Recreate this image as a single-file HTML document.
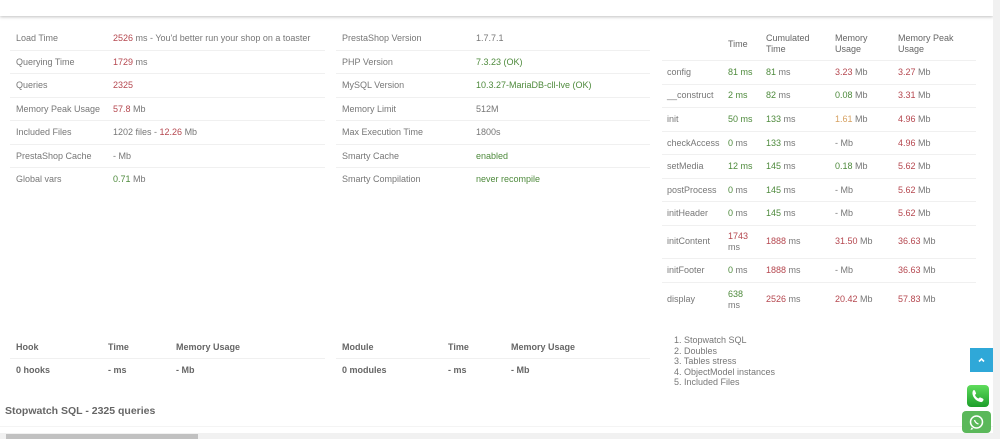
<!DOCTYPE html>
<html><head><meta charset="utf-8"><style>
*{margin:0;padding:0;box-sizing:border-box}
body{width:1000px;height:439px;overflow:hidden;background:#fff;font-family:"Liberation Sans",sans-serif;font-size:9px;color:#777;position:relative}
.a{position:absolute;white-space:nowrap}
.r{color:#b5474f}.g{color:#4e8a3c}.o{color:#d6a060}
.l{position:absolute;height:1px;background:#f0f0f0}
.h{position:absolute;line-height:11px}
b{font-weight:bold;color:#666}
</style></head><body>
<div class="a" style="left:0;top:0;width:993px;height:16px;background:#fff;box-shadow:0 1px 3px rgba(0,0,0,.25)"></div>
<div class="a" style="left:993px;top:0;width:7px;height:439px;background:#f1f1f1"></div>

<div class="a" style="left:16px;top:33px">Load Time</div><div class="a" style="left:113px;top:33px"><span class="r">2526</span> ms - You'd better run your shop on a toaster</div>
<div class="a" style="left:16px;top:57px">Querying Time</div><div class="a" style="left:113px;top:57px"><span class="r">1729</span> ms</div>
<div class="a" style="left:16px;top:80px">Queries</div><div class="a r" style="left:113px;top:80px">2325</div>
<div class="a" style="left:16px;top:104px">Memory Peak Usage</div><div class="a" style="left:113px;top:104px"><span class="r">57.8</span> Mb</div>
<div class="a" style="left:16px;top:127px">Included Files</div><div class="a" style="left:113px;top:127px">1202 files - <span class="r">12.26</span> Mb</div>
<div class="a" style="left:16px;top:151px">PrestaShop Cache</div><div class="a" style="left:113px;top:151px">- Mb</div>
<div class="a" style="left:16px;top:174px">Global vars</div><div class="a" style="left:113px;top:174px"><span class="g">0.71</span> Mb</div>
<div class="l" style="left:10px;width:315px;top:50px"></div><div class="l" style="left:10px;width:315px;top:73px"></div><div class="l" style="left:10px;width:315px;top:97px"></div><div class="l" style="left:10px;width:315px;top:120px"></div><div class="l" style="left:10px;width:315px;top:144px"></div><div class="l" style="left:10px;width:315px;top:167px"></div>

<div class="a" style="left:342px;top:33px">PrestaShop Version</div><div class="a" style="left:476px;top:33px">1.7.7.1</div>
<div class="a" style="left:342px;top:57px">PHP Version</div><div class="a g" style="left:476px;top:57px">7.3.23 (OK)</div>
<div class="a" style="left:342px;top:80px">MySQL Version</div><div class="a g" style="left:476px;top:80px">10.3.27-MariaDB-cll-lve (OK)</div>
<div class="a" style="left:342px;top:104px">Memory Limit</div><div class="a" style="left:476px;top:104px">512M</div>
<div class="a" style="left:342px;top:127px">Max Execution Time</div><div class="a" style="left:476px;top:127px">1800s</div>
<div class="a" style="left:342px;top:151px">Smarty Cache</div><div class="a g" style="left:476px;top:151px">enabled</div>
<div class="a" style="left:342px;top:174px">Smarty Compilation</div><div class="a g" style="left:476px;top:174px">never recompile</div>
<div class="l" style="left:336px;width:314px;top:50px"></div><div class="l" style="left:336px;width:314px;top:73px"></div><div class="l" style="left:336px;width:314px;top:97px"></div><div class="l" style="left:336px;width:314px;top:120px"></div><div class="l" style="left:336px;width:314px;top:144px"></div><div class="l" style="left:336px;width:314px;top:167px"></div>

<div class="h" style="left:728px;top:39px;color:#666">Time</div>
<div class="h" style="left:766px;top:33px;color:#666">Cumulated<br>Time</div>
<div class="h" style="left:835px;top:33px;color:#666">Memory<br>Usage</div>
<div class="h" style="left:898px;top:33px;color:#666">Memory Peak<br>Usage</div>
<div class="l" style="left:662px;width:314px;top:60px"></div>
<div class="a" style="left:667px;top:67px">config</div><div class="a g" style="left:728px;top:67px">81 ms</div><div class="a" style="left:766px;top:67px"><span class="g">81</span> ms</div><div class="a" style="left:835px;top:67px"><span class="r">3.23</span> Mb</div><div class="a" style="left:898px;top:67px"><span class="r">3.27</span> Mb</div>
<div class="l" style="left:662px;width:314px;top:84px"></div>
<div class="a" style="left:667px;top:90px">__construct</div><div class="a g" style="left:728px;top:90px">2 ms</div><div class="a" style="left:766px;top:90px"><span class="g">82</span> ms</div><div class="a" style="left:835px;top:90px"><span class="g">0.08</span> Mb</div><div class="a" style="left:898px;top:90px"><span class="r">3.31</span> Mb</div>
<div class="l" style="left:662px;width:314px;top:107px"></div>
<div class="a" style="left:667px;top:114px">init</div><div class="a g" style="left:728px;top:114px">50 ms</div><div class="a" style="left:766px;top:114px"><span class="g">133</span> ms</div><div class="a" style="left:835px;top:114px"><span class="o">1.61</span> Mb</div><div class="a" style="left:898px;top:114px"><span class="r">4.96</span> Mb</div>
<div class="l" style="left:662px;width:314px;top:131px"></div>
<div class="a" style="left:667px;top:138px">checkAccess</div><div class="a" style="left:728px;top:138px"><span class="g">0</span> ms</div><div class="a" style="left:766px;top:138px"><span class="g">133</span> ms</div><div class="a" style="left:835px;top:138px">- Mb</div><div class="a" style="left:898px;top:138px"><span class="r">4.96</span> Mb</div>
<div class="l" style="left:662px;width:314px;top:154px"></div>
<div class="a" style="left:667px;top:161px">setMedia</div><div class="a g" style="left:728px;top:161px">12 ms</div><div class="a" style="left:766px;top:161px"><span class="g">145</span> ms</div><div class="a" style="left:835px;top:161px"><span class="g">0.18</span> Mb</div><div class="a" style="left:898px;top:161px"><span class="r">5.62</span> Mb</div>
<div class="l" style="left:662px;width:314px;top:178px"></div>
<div class="a" style="left:667px;top:185px">postProcess</div><div class="a" style="left:728px;top:185px"><span class="g">0</span> ms</div><div class="a" style="left:766px;top:185px"><span class="g">145</span> ms</div><div class="a" style="left:835px;top:185px">- Mb</div><div class="a" style="left:898px;top:185px"><span class="r">5.62</span> Mb</div>
<div class="l" style="left:662px;width:314px;top:201px"></div>
<div class="a" style="left:667px;top:208px">initHeader</div><div class="a" style="left:728px;top:208px"><span class="g">0</span> ms</div><div class="a" style="left:766px;top:208px"><span class="g">145</span> ms</div><div class="a" style="left:835px;top:208px">- Mb</div><div class="a" style="left:898px;top:208px"><span class="r">5.62</span> Mb</div>
<div class="l" style="left:662px;width:314px;top:225px"></div>
<div class="a" style="left:667px;top:236px">initContent</div><div class="h" style="left:728px;top:231px"><span class="r">1743</span><br>ms</div><div class="a" style="left:766px;top:236px"><span class="r">1888</span> ms</div><div class="a" style="left:835px;top:236px"><span class="r">31.50</span> Mb</div><div class="a" style="left:898px;top:236px"><span class="r">36.63</span> Mb</div>
<div class="l" style="left:662px;width:314px;top:258px"></div>
<div class="a" style="left:667px;top:265px">initFooter</div><div class="a" style="left:728px;top:265px"><span class="g">0</span> ms</div><div class="a" style="left:766px;top:265px"><span class="r">1888</span> ms</div><div class="a" style="left:835px;top:265px">- Mb</div><div class="a" style="left:898px;top:265px"><span class="r">36.63</span> Mb</div>
<div class="l" style="left:662px;width:314px;top:282px"></div>
<div class="a" style="left:667px;top:294px">display</div><div class="h" style="left:728px;top:289px"><span class="g">638</span><br>ms</div><div class="a" style="left:766px;top:294px"><span class="r">2526</span> ms</div><div class="a" style="left:835px;top:294px"><span class="r">20.42</span> Mb</div><div class="a" style="left:898px;top:294px"><span class="r">57.83</span> Mb</div>

<div class="a" style="left:16px;top:342px"><b>Hook</b></div><div class="a" style="left:108px;top:342px"><b>Time</b></div><div class="a" style="left:176px;top:342px"><b>Memory Usage</b></div>
<div class="l" style="left:10px;width:315px;top:358px"></div>
<div class="a" style="left:16px;top:365px"><b>0 hooks</b></div><div class="a" style="left:108px;top:365px"><b>- ms</b></div><div class="a" style="left:176px;top:365px"><b>- Mb</b></div>
<div class="a" style="left:342px;top:342px"><b>Module</b></div><div class="a" style="left:448px;top:342px"><b>Time</b></div><div class="a" style="left:511px;top:342px"><b>Memory Usage</b></div>
<div class="l" style="left:336px;width:314px;top:358px"></div>
<div class="a" style="left:342px;top:365px"><b>0 modules</b></div><div class="a" style="left:448px;top:365px"><b>- ms</b></div><div class="a" style="left:511px;top:365px"><b>- Mb</b></div>

<div class="h" style="left:674px;top:335px;line-height:10.5px">1. Stopwatch SQL<br>2. Doubles<br>3. Tables stress<br>4. ObjectModel instances<br>5. Included Files</div>

<div class="a" style="left:5px;top:405px;font-size:10.5px;font-weight:bold;color:#666">Stopwatch SQL - 2325 queries</div>
<div class="l" style="left:0;width:993px;top:426px;background:#f4f4f4"></div>

<div class="a" style="left:0;top:433px;width:993px;height:6px;background:#f1f1f1"></div>
<div class="a" style="left:6px;top:434px;width:192px;height:5px;background:#c1c1c1"></div>

<div class="a" style="left:970px;top:348px;width:23px;height:24px;background:#2fa8d8">
<svg width="23" height="24" viewBox="0 0 23 24"><path d="M9 13.5l2.5-2.5 2.5 2.5" stroke="#fff" stroke-width="1.6" fill="none"/></svg></div>
<div class="a" style="left:967px;top:385px;width:22px;height:22px;border-radius:4px;background:linear-gradient(#5fdc5c,#1c9e2a)">
<svg width="22" height="22" viewBox="0 0 22 22"><path d="M7 5c1 0 1.5 2 2 3s-1 1.5-1 2c.5 1.5 2 3 3.5 3.5.5 0 1-1.5 2-1s3 1 3 2-1 3-3 2.5C9 16 6 12.5 5.5 9 5.3 7 6 5 7 5z" fill="#fff"/></svg></div>
<div class="a" style="left:962px;top:411px;width:29px;height:22px;border-radius:4px;background:#5bb85a">
<svg width="29" height="22" viewBox="0 0 29 22"><circle cx="14.5" cy="11" r="6" fill="none" stroke="#fff" stroke-width="1.5"/><path d="M9.5 16.5l-1 2.5 3-1" fill="#fff"/><path d="M12.5 9c.5 2 2 3.5 4 4" stroke="#fff" stroke-width="1.3" fill="none"/></svg></div>
</body></html>
